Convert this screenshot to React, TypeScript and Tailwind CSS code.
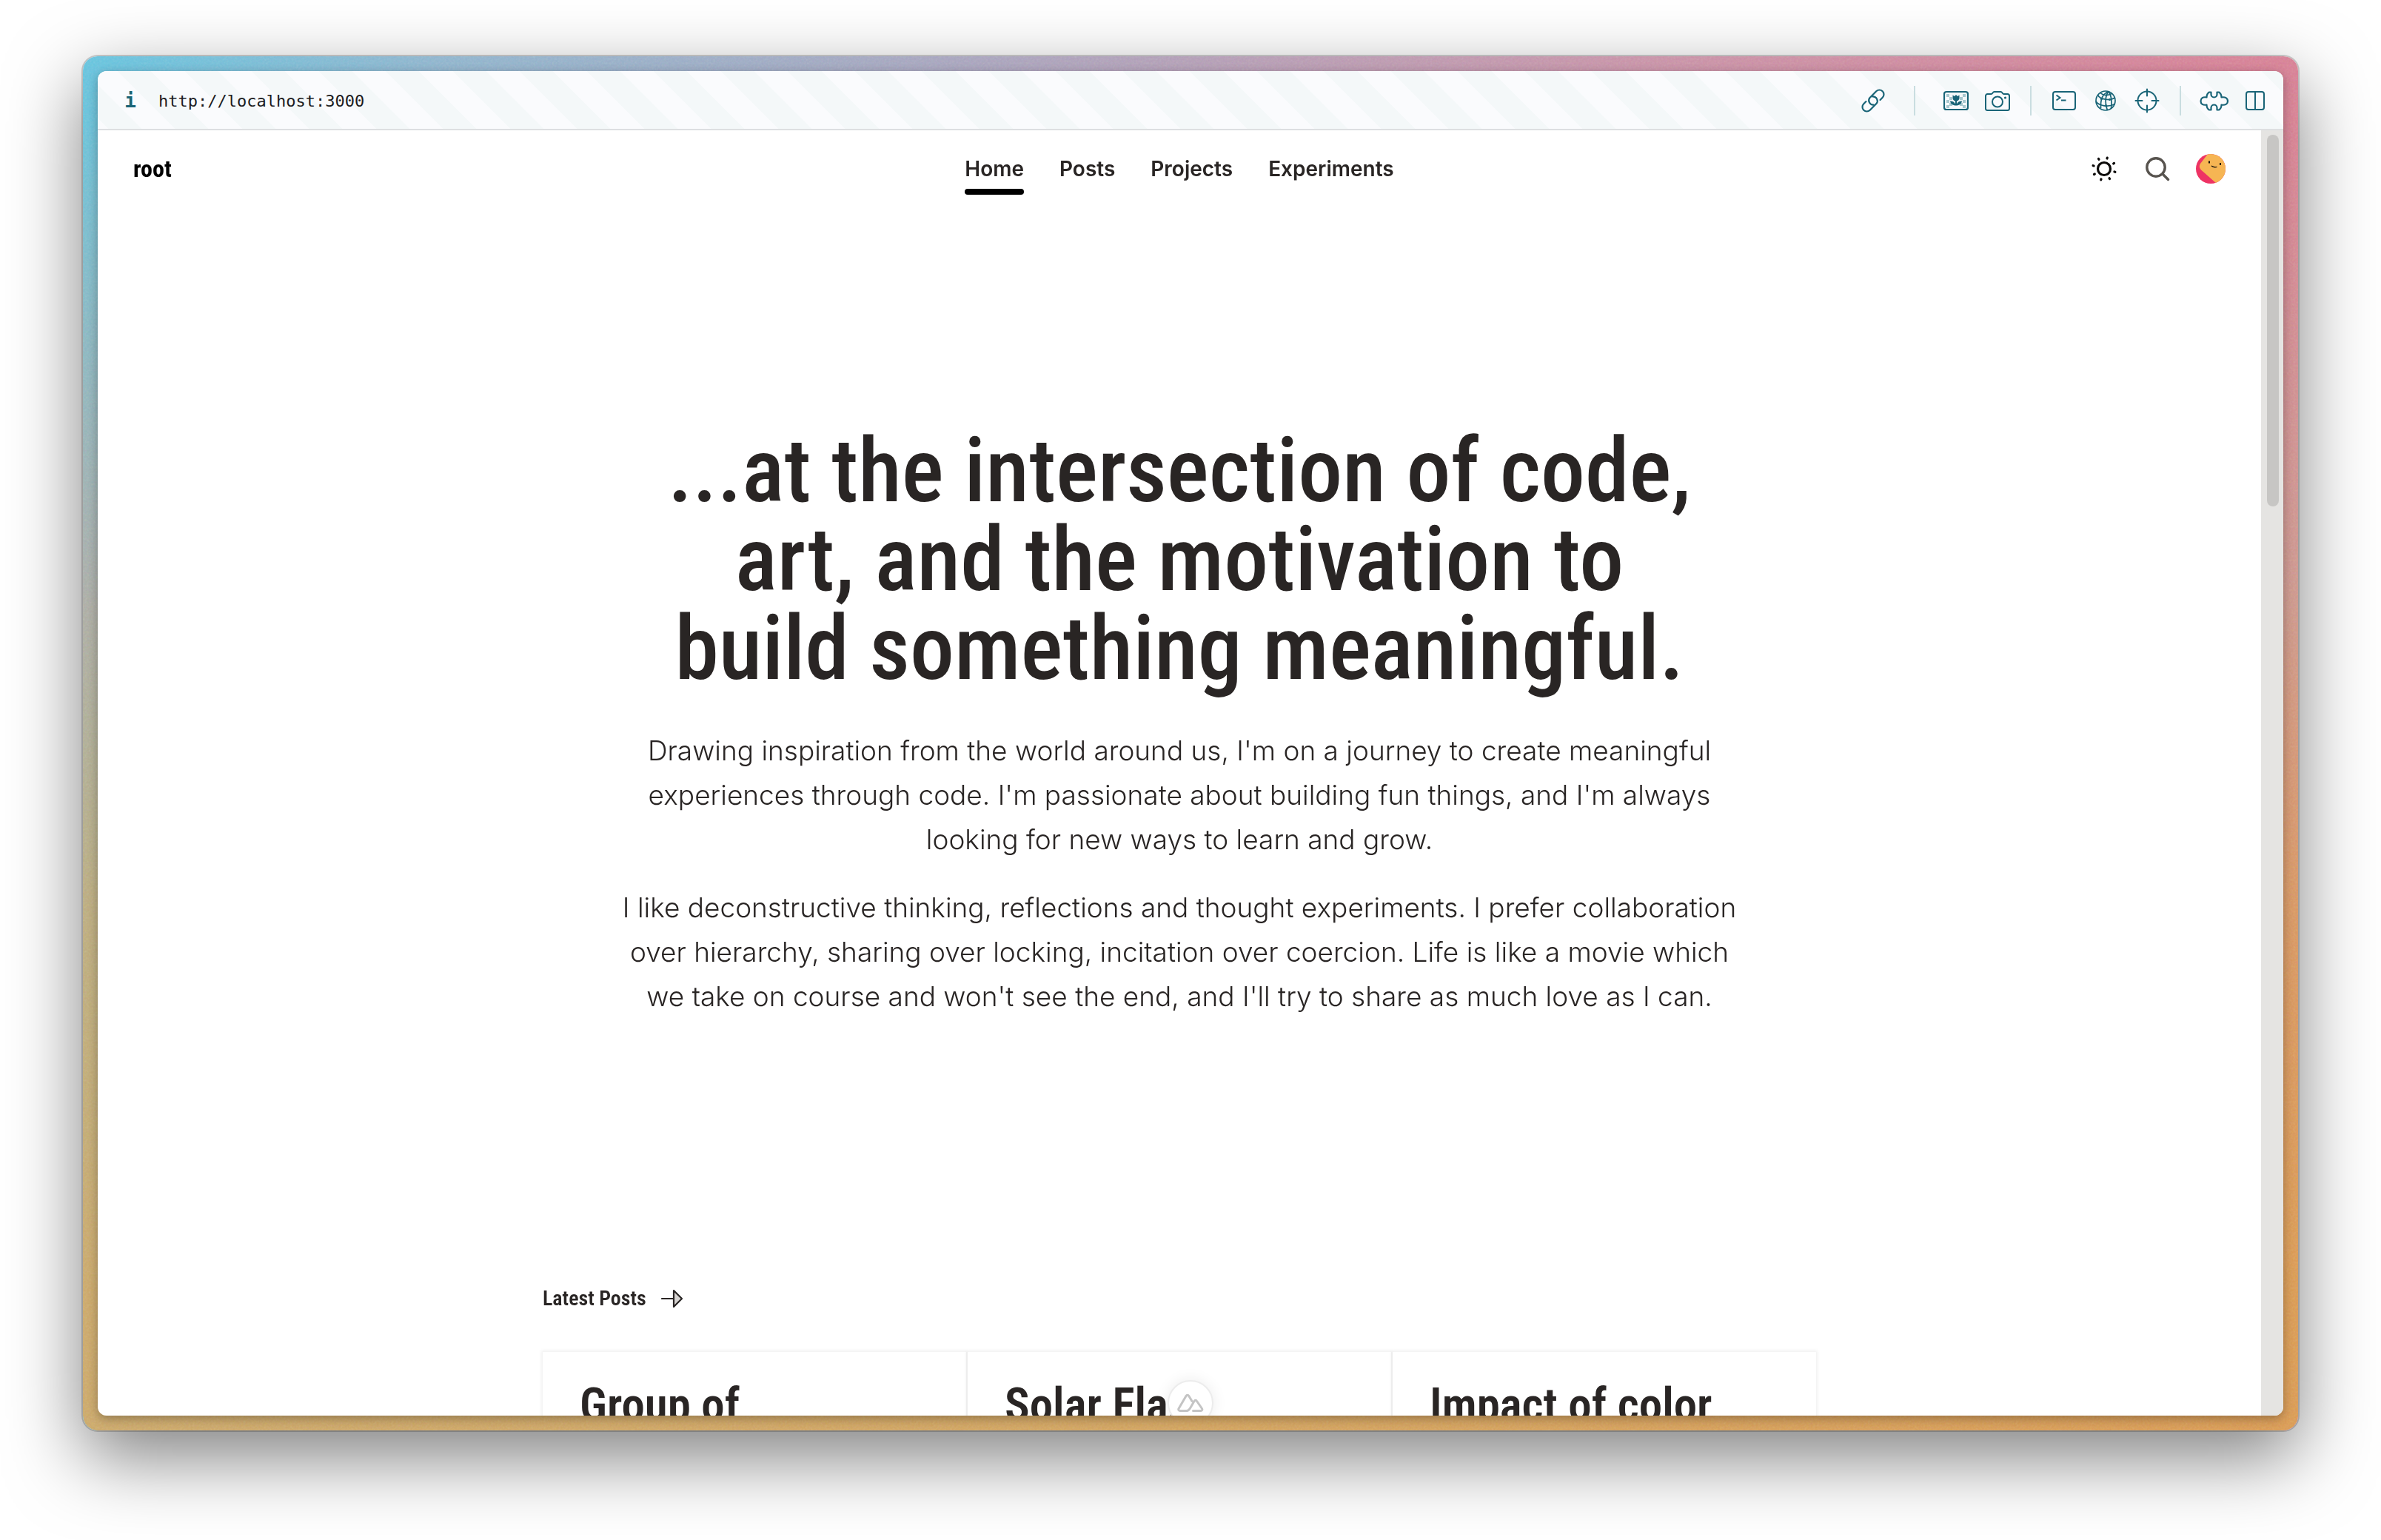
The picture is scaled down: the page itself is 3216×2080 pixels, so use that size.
import type { ReactNode } from 'react';

function ToolButton({ label, children }: { label: string; children: ReactNode }) {
  return (
    <button type="button" aria-label={label} className="flex h-14 w-14 items-center justify-center">
      {children}
    </button>
  );
}

function LinkIcon() {
  return (
    <svg width="34" height="34" viewBox="0 0 34 34" fill="none" stroke="currentColor" strokeWidth="2.2" strokeLinecap="round">
      <g transform="translate(17 17) rotate(-45)">
        <path d="M-7.5 -6H-12A6 6 0 0 0 -12 6H0.5A6 6 0 0 0 3.5 -4.500" />
        <path d="M7.5 6H12A6 6 0 0 0 12 -6H-0.5A6 6 0 0 0 -3.5 4.500" />
      </g>
    </svg>
  );
}

const checks = [
  [4, 5], [8, 9], [4, 13], [8, 17], [4, 20], [26, 5], [22, 9], [26, 13], [22, 17], [26, 20],
];

function ImageIcon() {
  return (
    <svg width="34" height="28" viewBox="0 0 34 28" fill="none">
      <rect x="1" y="2" width="32" height="24" rx="3" stroke="currentColor" strokeWidth="2.2" />
      {checks.map(([x, y]) => (
        <rect key={`${x}-${y}`} x={x} y={y} width="4" height="4" fill="#a9c8cf" />
      ))}
      <path
        d="M12.500 6.500l2.500 1.500 2-2 2 2 2.500-1.500v4c0 2-1.500 3.500-3.500 4v4c1-2.500 3.500-4 7-4-.500 3.800-3.500 6-8 6s-7.500-2.200-8-6c3.500 0 6 1.500 7 4v-4c-2-.500-3.500-2-3.500-4z"
        fill="currentColor"
      />
    </svg>
  );
}

function CameraIcon() {
  return (
    <svg width="34" height="28" viewBox="0 0 34 28" fill="none" stroke="currentColor" strokeWidth="2">
      <path d="M3.500 5H8.500C10.500 5 10.500 2 12.500 2h9C23.500 2 23.500 5 25.500 5H30.500A2.500 2.500 0 0 1 33 7.500V24.500A2.500 2.500 0 0 1 30.500 27H3.500A2.500 2.500 0 0 1 1 24.500V7.500A2.500 2.500 0 0 1 3.500 5z" />
      <circle cx="17" cy="15.500" r="7" />
      <circle cx="27.500" cy="10" r="1.600" fill="currentColor" stroke="none" />
    </svg>
  );
}

function TerminalIcon() {
  return (
    <svg width="34" height="28" viewBox="0 0 34 28" fill="none" stroke="currentColor" strokeWidth="2">
      <rect x="2" y="2" width="30" height="24" rx="3" />
      <path d="M6.500 6.500l5 3.500-5 3.500M13 13.500h6.500" />
    </svg>
  );
}

function GlobeIcon() {
  return (
    <svg width="30" height="30" viewBox="0 0 30 30" fill="none" stroke="currentColor" strokeWidth="1.700">
      <circle cx="15" cy="15" r="13" />
      <path d="M19 2.500C11 6 8 12 8.500 25M19 2.500C14 9 14 20 17.500 28M19 2.500C23 8 24 15 22.500 25.500" />
      <path d="M4.500 7.500C8 13.500 20 15.500 28 11M2 16c4 6 17 8.500 25.500 3.500M8 4.500c3 3 9 4.500 15 1" />
      <circle cx="9.500" cy="12.500" r="1.600" fill="currentColor" stroke="none" />
      <circle cx="20.500" cy="13.500" r="1.600" fill="currentColor" stroke="none" />
      <circle cx="15.500" cy="21.500" r="1.600" fill="currentColor" stroke="none" />
    </svg>
  );
}

function TargetIcon() {
  return (
    <svg width="34" height="34" viewBox="0 0 34 34" fill="none" stroke="currentColor" strokeWidth="2" strokeLinecap="round">
      <circle cx="17" cy="17" r="12.500" />
      <path d="M17 1.500v9M17 23.500v9M1.500 17h9M23.500 17h9" />
    </svg>
  );
}

function PuzzleIcon() {
  return (
    <svg width="39" height="27" viewBox="0 0 39 27" fill="none" stroke="currentColor" strokeWidth="2.200" strokeLinejoin="round">
      <path d="M13 1.500H15.500V4.500A4 4 0 0 0 23.500 4.500V1.500H26C28.500 3 29.500 5 29.500 8.500C34.500 7.500 38 9.500 38 13.500S34.500 19.500 29.500 18.500C29.500 22 28.500 24 26 25.500H23.500V22.500A4 4 0 0 0 15.500 22.500V25.500H13C10.500 24 9.500 22 9.500 18.500C4.500 19.500 1.500 17.500 1.500 13.500S4.500 7.500 9.500 8.500C9.500 5 10.500 3 13 1.500z" />
    </svg>
  );
}

function ColumnsIcon() {
  return (
    <svg width="26" height="28" viewBox="0 0 26 28" fill="none" stroke="currentColor" strokeWidth="2">
      <rect x="1" y="2" width="24" height="24" rx="3" />
      <path d="M13 2v24" />
    </svg>
  );
}

function SunIcon() {
  return (
    <svg width="40" height="40" viewBox="0 0 40 40" fill="none" stroke="#0c0a09" strokeWidth="3.200">
      <circle cx="20" cy="20" r="8.500" />
      <g strokeLinecap="round">
        {[0, 45, 90, 135, 180, 225, 270, 315].map((a) => (
          <path key={a} d="M34.500 20h1" transform={`rotate(${a + 16} 20 20)`} />
        ))}
      </g>
    </svg>
  );
}

function SearchIcon() {
  return (
    <svg width="40" height="40" viewBox="0 0 40 40" fill="none" stroke="#57534e" strokeWidth="3.400" strokeLinecap="round">
      <circle cx="18" cy="18" r="12.200" />
      <path d="M27 27l7.500 7.500" />
    </svg>
  );
}

function Avatar() {
  return (
    <svg width="40" height="40" viewBox="0 0 40 40" className="rounded-full">
      <rect width="40" height="40" fill="#ee3364" />
      <path d="M16 0L6 13Q3 17.500 7 21.500L28 40H40V0z" fill="#f6b553" />
      <path d="M17 9.500h2v3h-2zM32 12h2v3h-2z" fill="#0c0a09" />
      <path d="M21 16q3.500 2.800 7.500 1.500" fill="none" stroke="#0c0a09" strokeWidth="1.200" />
    </svg>
  );
}

function ArrowIcon() {
  return (
    <svg width="30" height="26" viewBox="0 0 30 26" fill="none" stroke="#292524" strokeWidth="2.200" strokeLinejoin="round">
      <path d="M1 13h15" strokeLinecap="round" />
      <path d="M17 2l11 11-11 11z" fill="#d6d3d1" />
    </svg>
  );
}

function MountainIcon() {
  return (
    <svg width="36" height="26" viewBox="0 0 36 26" fill="none" stroke="#c4c4c4" strokeWidth="3" strokeLinecap="round">
      <path d="M13 23.500H4C2 23.500 1.200 22 2.200 20.300L12 3.500C13 1.800 14.800 1.800 15.800 3.500L20 10.500" />
      <path d="M13 23.500C15.500 23.500 16 22.500 17.500 20L23 10.500C24 8.800 25.600 8.800 26.600 10.500L33.500 20.500C34.500 22 33.500 23.500 32 23.500H21.500" />
    </svg>
  );
}

function Divider() {
  return <span className="mx-4 h-10 w-0.5 bg-[#c9dde0]" />;
}

const links = ['Home', 'Posts', 'Projects', 'Experiments'];
const posts = ['Group of', 'Solar Flare', 'Impact of color'];

export default function App() {
  return (
    <div className="h-screen overflow-hidden bg-white px-28 pt-[76px] pb-[148px] font-['Inter',sans-serif] text-[#292524]">
      <div className="relative flex h-full flex-col rounded-[20px] bg-[linear-gradient(to_bottom,transparent_5%,#bda4b4a0_40%,transparent_80%),linear-gradient(to_right,#66c3de_0%,#8fb4cd_16%,#a8a4bd_40%,#c793a8_70%,#d68095_100%)] p-5 shadow-[0_0_0_2px_rgba(0,0,0,0.18),0_36px_100px_rgba(0,0,0,0.5)]">
        <div className="absolute inset-0 rounded-[20px] bg-[linear-gradient(to_right,#cba86a,#d2a35f_50%,#d99a54)] [mask-image:linear-gradient(to_bottom,transparent_0%,rgba(0,0,0,0.3)_38%,rgba(0,0,0,0.8)_62%,black_90%)]" />
        <svg className="absolute inset-0 h-full w-full rounded-[20px] opacity-50 mix-blend-soft-light" aria-hidden="true">
          <filter id="grain">
            <feTurbulence type="fractalNoise" baseFrequency="0.35" numOctaves="2" />
          </filter>
          <rect width="100%" height="100%" filter="url(#grain)" />
        </svg>

        <div className="relative flex min-h-0 flex-1 flex-col rounded-xl shadow-[0_4px_14px_rgba(0,0,0,0.3)]">
          <div className="relative flex min-h-0 flex-1 flex-col overflow-hidden rounded-xl bg-white">
            <header className="flex h-20 shrink-0 items-center border-b-2 border-[#dddfe1] bg-[repeating-linear-gradient(45deg,#fafbfd_0_10px,#f4f8f9_10px_42px,#fafbfd_42px_64px)] pt-0.5 pr-2.5 pl-[22px] text-[#196477]">
              <button type="button" aria-label="Page info" className="w-11 text-center font-['DejaVu_Sans_Mono',monospace] text-[26px] font-bold">
                i
              </button>
              <input
                aria-label="Address"
                readOnly
                value="http://localhost:3000"
                className="ml-4 min-w-0 flex-1 bg-transparent font-['DejaVu_Sans_Mono',monospace] text-[22px] text-[#1c1c1f] outline-none"
              />
              <ToolButton label="Copy link"><LinkIcon /></ToolButton>
              <span className="mx-[27px] h-10 w-0.5 bg-[#c9dde0]" />
              <ToolButton label="Capture page"><ImageIcon /></ToolButton>
              <ToolButton label="Screenshot"><CameraIcon /></ToolButton>
              <Divider />
              <ToolButton label="Console"><TerminalIcon /></ToolButton>
              <ToolButton label="Network"><GlobeIcon /></ToolButton>
              <ToolButton label="Inspect"><TargetIcon /></ToolButton>
              <Divider />
              <ToolButton label="Extensions"><PuzzleIcon /></ToolButton>
              <ToolButton label="Split view"><ColumnsIcon /></ToolButton>
            </header>

            <div className="flex min-h-0 flex-1">
              <div className="min-w-0 flex-1 overflow-hidden">
                <div className="grid h-[104px] grid-cols-[1fr_auto_1fr] items-center px-12">
                  <a href="#" className="font-['Roboto_Condensed',Roboto,sans-serif] text-[32px] leading-10 font-bold text-black">
                    root
                  </a>
                  <nav className="flex gap-12 text-[28px] leading-10 font-semibold">
                    {links.map((l) => (
                      <a key={l} href="#" className="relative">
                        {l}
                        {l === 'Home' && <span className="absolute top-[47px] left-0 h-2 w-full rounded-full bg-black" />}
                      </a>
                    ))}
                  </nav>
                  <div className="flex justify-end gap-8">
                    <button type="button" aria-label="Toggle theme"><SunIcon /></button>
                    <button type="button" aria-label="Search"><SearchIcon /></button>
                    <button type="button" aria-label="Account"><Avatar /></button>
                  </div>
                </div>

                <main className="mx-auto max-w-[1720px] pt-[296px]">
                  <section className="text-center">
                    <h1 className="font-['Roboto_Condensed',Roboto,sans-serif] text-[120px] leading-[120px] font-medium">
                      ...at the intersection of code,
                      <br />
                      art, and the motivation to
                      <br />
                      build something meaningful.
                    </h1>
                    <p className="mt-12 text-[37px] leading-[60px] font-light">
                      Drawing inspiration from the world around us, I'm on a journey to create meaningful
                      <br />
                      experiences through code. I'm passionate about building fun things, and I'm always
                      <br />
                      looking for new ways to learn and grow.
                    </p>
                    <p className="mt-8 text-[37px] leading-[60px] font-light">
                      I like deconstructive thinking, reflections and thought experiments. I prefer collaboration
                      <br />
                      over hierarchy, sharing over locking, incitation over coercion. Life is like a movie which
                      <br />
                      we take on course and won't see the end, and I'll try to share as much love as I can.
                    </p>
                  </section>

                  <section className="mt-[358px]">
                    <h2 className="font-['Roboto_Condensed',Roboto,sans-serif] text-[28px] leading-10 font-semibold">
                      <a href="#" className="flex items-center gap-5">
                        Latest Posts
                        <ArrowIcon />
                      </a>
                    </h2>
                    <div className="mt-[52px] grid grid-cols-3 gap-0.5">
                      {posts.map((p) => (
                        <article key={p} className="h-[480px] bg-white px-[50px] pt-10 shadow-[0_0_4px_2px_rgba(0,0,0,0.06)]">
                          <h3 className="font-['Roboto_Condensed',Roboto,sans-serif] text-[63px] leading-[64px] font-semibold">{p}</h3>
                        </article>
                      ))}
                    </div>
                  </section>
                </main>
              </div>

              <div className="w-[30px] shrink-0 bg-[#e5e4e2] px-2 pt-1.5">
                <div className="h-[502px] w-4 rounded-full bg-[#c7c6c4]" />
              </div>
            </div>

            <button
              type="button"
              aria-label="Open devtools"
              className="absolute -bottom-3.5 left-1/2 flex h-[62px] w-[62px] -translate-x-1/2 items-center justify-center rounded-full border-2 border-[#ececec] bg-white shadow-[0_0_20px_rgba(0,0,0,0.08)]"
            >
              <MountainIcon />
            </button>
          </div>
        </div>
      </div>
    </div>
  );
}
